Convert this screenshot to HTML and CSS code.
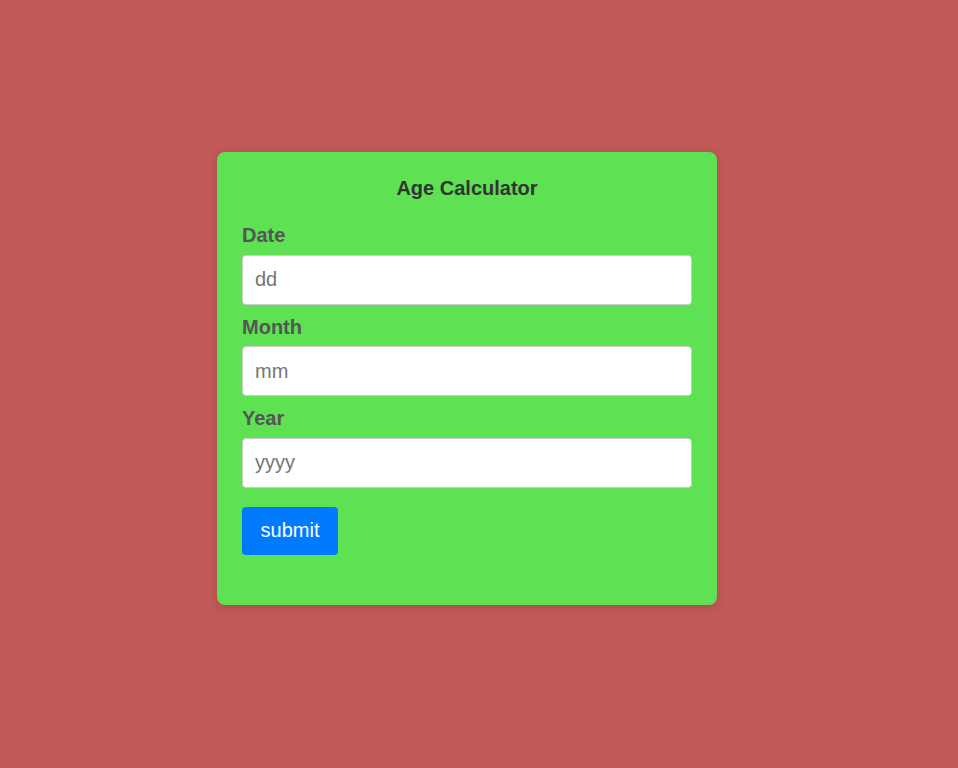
FILE: index.html
```html
<!DOCTYPE html>
<html>
<head>
<meta charset="utf-8">
<title>Age Calculator</title>
<link rel="stylesheet" href="styles.css">
</head>
<body>
<div class="card">
  <h2 class="title">Age Calculator</h2>
  <form class="form">
    <label class="label" for="d">Date</label>
    <input class="input" id="d" type="text" placeholder="dd">
    <label class="label" for="m">Month</label>
    <input class="input" id="m" type="text" placeholder="mm">
    <label class="label" for="y">Year</label>
    <input class="input" id="y" type="text" placeholder="yyyy">
    <button class="btn" type="button">submit</button>
  </form>
</div>
</body>
</html>
```

FILE: styles.css
```css
html, body {
  margin: 0;
  padding: 0;
}
body {
  background: #c15957;
  font-family: "Liberation Sans", Arial, sans-serif;
  min-height: 768px;
  padding-top: 152px;
  box-sizing: border-box;
}
.card {
  width: 500px;
  box-sizing: border-box;
  margin-left: 217px;
  background: #5ee152;
  border-radius: 8px;
  padding: 25px 25px 50px;
  box-shadow: 0 2px 8px rgba(0, 0, 0, 0.15);
}
.title {
  margin: 0 0 24px;
  font-size: 20px;
  line-height: 23px;
  font-weight: bold;
  color: #333;
  text-align: center;
}
.form {
  display: flex;
  flex-direction: column;
  align-items: flex-start;
}
.label {
  display: block;
  font-size: 20px;
  line-height: 23.5px;
  font-weight: bold;
  color: #555;
  margin-bottom: 7px;
}
.input {
  width: 100%;
  height: 50px;
  box-sizing: border-box;
  border: 1px solid #ccc;
  border-radius: 4px;
  padding: 0 12px;
  font-size: 20px;
  font-family: "Liberation Sans", Arial, sans-serif;
  margin: 0 0 11px;
  background: #fff;
  color: #333;
}
.input::placeholder {
  color: #757575;
}
.btn {
  margin-top: 8px;
  width: 96px;
  height: 48px;
  border: none;
  border-radius: 4px;
  background: #007bff;
  color: #fff;
  font-size: 20px;
  font-family: "Liberation Sans", Arial, sans-serif;
  padding: 0;
  cursor: pointer;
}
```
